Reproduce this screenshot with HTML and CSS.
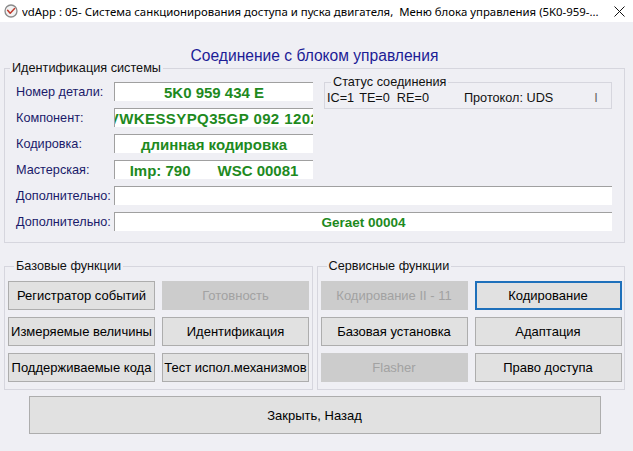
FILE: index.html
```html
<!DOCTYPE html>
<html lang="ru">
<head>
<meta charset="utf-8">
<title>vdApp</title>
<link rel="stylesheet" href="styles.css">
</head>
<body>
<div class="titlebar">
  <svg class="appicon" width="14" height="14" viewBox="0 0 14 14">
    <circle cx="7" cy="7" r="6" fill="#f2f2f2" stroke="#8a8a8a" stroke-width="1.3"/>
    <path d="M3.6 6.2 L6.2 9.2 L10.6 4.6" fill="none" stroke="#c0392b" stroke-width="1.5" stroke-linecap="round" stroke-linejoin="round"/>
  </svg>
  <span class="title">vdApp : 05- Система санкционирования доступа и пуска двигателя,  Меню блока управления (5K0-959-...</span>
  <svg class="closeicon" width="11" height="11" viewBox="0 0 11 11">
    <path d="M0.5 0.5 L10.5 10.5 M10.5 0.5 L0.5 10.5" stroke="#111" stroke-width="1"/>
  </svg>
</div>
<div class="main">
  <h1 class="heading">Соединение с блоком управления</h1>
  <fieldset class="group ident">
    <legend>Идентификация системы</legend>
    <div class="ident-grid">
      <span class="lbl">Номер детали:</span>
      <div class="field"><span>5K0 959 434 E</span></div>
      <fieldset class="group status">
        <legend>Статус соединения</legend>
        <div class="status-line"><span>IC=1</span><span class="s-te">TE=0</span><span class="s-re">RE=0</span><span class="s-proto">Протокол: UDS</span><span class="s-bar">I</span></div>
      </fieldset>
      <span class="lbl">Компонент:</span>
      <div class="field"><span class="spaced">VWKESSYPQ35GP 092 1202</span></div>
      <span class="lbl">Кодировка:</span>
      <div class="field"><span>длинная кодировка</span></div>
      <span class="lbl">Мастерская:</span>
      <div class="field"><span>Imp: 790</span><span class="wsc">WSC 00081</span></div>
      <span class="lbl">Дополнительно:</span>
      <div class="field wide"></div>
      <span class="lbl">Дополнительно:</span>
      <div class="field wide small"><span>Geraet 00004</span></div>
    </div>
  </fieldset>
  <div class="func-row">
    <fieldset class="group funcs">
      <legend>Базовые функции</legend>
      <div class="btn-grid">
        <button class="btn">Регистратор событий</button>
        <button class="btn" disabled>Готовность</button>
        <button class="btn">Измеряемые величины</button>
        <button class="btn">Идентификация</button>
        <button class="btn">Поддерживаемые кода</button>
        <button class="btn">Тест испол.механизмов</button>
      </div>
    </fieldset>
    <fieldset class="group funcs">
      <legend>Сервисные функции</legend>
      <div class="btn-grid">
        <button class="btn" disabled>Кодирование II - 11</button>
        <button class="btn focused">Кодирование</button>
        <button class="btn">Базовая установка</button>
        <button class="btn">Адаптация</button>
        <button class="btn" disabled>Flasher</button>
        <button class="btn">Право доступа</button>
      </div>
    </fieldset>
  </div>
  <button class="btn close-btn">Закрыть, Назад</button>
</div>
</body>
</html>
```
FILE: styles.css
```css
* { box-sizing: border-box; }
html, body {
  margin: 0;
  padding: 0;
  background: #efeff4;
  width: 633px;
  height: 451px;
  overflow: hidden;
  font-family: "Liberation Sans", Arial, sans-serif;
}
.titlebar {
  height: 22px;
  background: #ffffff;
  display: flex;
  align-items: center;
  padding: 0 8px 0 4px;
}
.appicon { flex: none; }
.title {
  flex: 1;
  min-width: 0;
  margin-left: 4px;
  font-family: "Noto Sans", "Open Sans", sans-serif;
  font-size: 11.4px;
  color: #000;
  white-space: pre;
  overflow: hidden;
}
.closeicon { flex: none; margin-left: 6px; }
.main {
  padding: 0 8px 0 4px;
}
.heading {
  margin: 26px 0 -3px;
  font-size: 15.6px;
  line-height: 16px;
  font-weight: normal;
  color: #1c1c96;
  text-align: center;
}
.group {
  margin: 0;
  border: 1px solid #d6d6de;
  min-width: 0;
}
.group > legend {
  font-size: 12.7px;
  line-height: 14px;
  color: #111;
  padding: 0 2px;
}
.ident {
  padding: 7px 12px 11px 11px;
}
.ident > legend { margin-left: -6px; }
.ident-grid {
  display: grid;
  grid-template-columns: 98px 199px 11px 1fr;
  grid-auto-rows: 19px;
  row-gap: 7px;
}
.lbl {
  grid-column: 1;
  align-self: center;
  font-size: 12.7px;
  color: #1a1a6a;
  white-space: nowrap;
}
.field {
  grid-column: 2;
  background: #fff;
  border-top: 1px solid #a0a0a0;
  border-left: 1px solid #a0a0a0;
  display: flex;
  justify-content: center;
  align-items: center;
  overflow: hidden;
  white-space: nowrap;
  font-size: 15px;
  font-weight: bold;
  color: #1e8a1e;
}
.field > span { flex: none; }
.field .spaced { letter-spacing: 0.4px; }
.field .wsc { margin-left: 27px; }
.field.wide { grid-column: 2 / 5; }
.field.small { font-size: 13.5px; }
.status {
  grid-column: 4;
  grid-row: 1 / 3;
  align-self: start;
  margin-top: -7px;
  height: 34px;
  padding: 0 2px;
}
.status > legend { margin-left: 4px; }
.status-line {
  display: flex;
  padding-top: 2px;
  font-size: 12.7px;
  line-height: 14px;
  color: #111;
  white-space: nowrap;
}
.s-te { margin-left: 5px; }
.s-re { margin-left: 7px; }
.s-proto { margin-left: 35px; }
.s-bar { margin-left: 41px; color: #666; }
.func-row {
  display: flex;
  gap: 4px;
  margin-top: 16px;
}
.funcs {
  flex: 1;
  padding: 8px 3px 7px 3px;
}
.funcs > legend { margin-left: 6px; }
.btn-grid {
  display: grid;
  grid-template-columns: 147px 147px;
  grid-auto-rows: 29px;
  column-gap: 7px;
  row-gap: 7px;
}
.btn {
  margin: 0;
  padding: 0;
  background: #e1e1e1;
  border: 1px solid #adadad;
  border-radius: 0;
  font-family: "Liberation Sans", Arial, sans-serif;
  font-size: 13px;
  color: #000;
  white-space: nowrap;
  overflow: hidden;
}
.btn:disabled {
  background: #cccccc;
  border-color: #cccccc;
  color: #a2a2a2;
}
.btn.focused {
  border: 2px solid #1e70bb;
}
.close-btn {
  display: block;
  width: 572px;
  height: 38px;
  margin: 6px auto 0;
}
```
